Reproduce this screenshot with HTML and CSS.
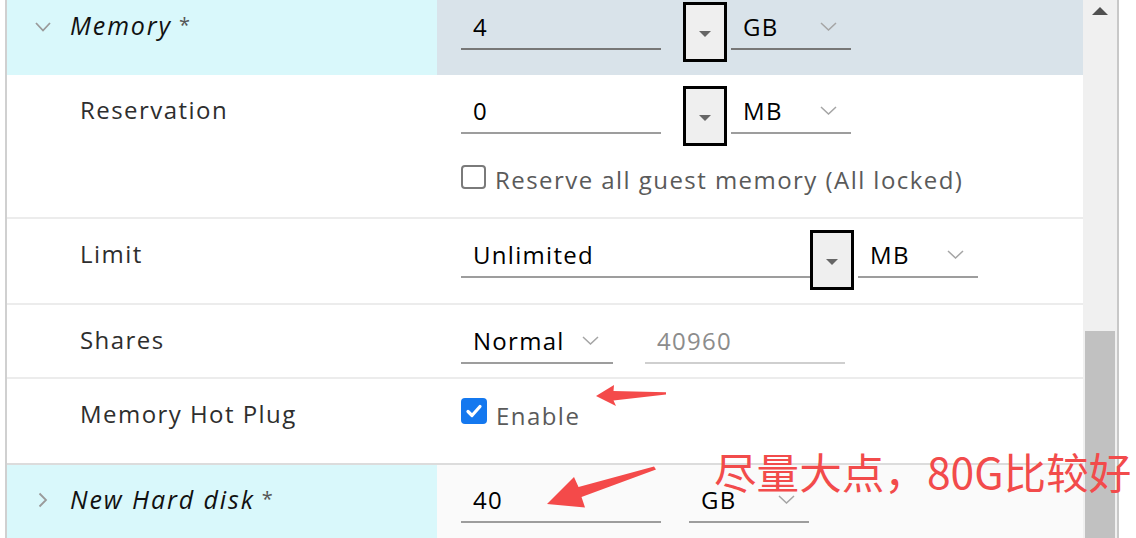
FILE: index.html
```html
<!DOCTYPE html>
<html>
<head>
<meta charset="utf-8">
<link rel="stylesheet" href="styles.css">
</head>
<body>
<div class="page">
  <div class="grid">
    <div class="row head">
      <div class="lab cyan">
        <svg class="twisty" width="16" height="10" viewBox="0 0 16 10"><polyline points="1,1 8,8.5 15,1" fill="none" stroke="#9a9a9a" stroke-width="1.8"/></svg>
        <span class="title">Memory</span><span class="star">*</span>
      </div>
      <div class="val headval">
        <div class="ctl">
          <div class="field dark w200"><span>4</span></div>
          <div class="spin sp1"><i></i></div>
          <div class="field dark sel w120"><span>GB</span><svg class="chev" width="17" height="9" viewBox="0 0 17 9"><polyline points="1,1 8.5,8 16,1" fill="none" stroke="#a5a5a5" stroke-width="1.5"/></svg></div>
        </div>
      </div>
    </div>

    <div class="row res">
      <div class="lab"><span class="name">Reservation</span></div>
      <div class="val col">
        <div class="ctl">
          <div class="field w200"><span>0</span></div>
          <div class="spin sp1"><i></i></div>
          <div class="field sel w120"><span>MB</span><svg class="chev" width="17" height="9" viewBox="0 0 17 9"><polyline points="1,1 8.5,8 16,1" fill="none" stroke="#a5a5a5" stroke-width="1.5"/></svg></div>
        </div>
        <label class="chk"><span class="box"></span><span class="chktext">Reserve all guest memory (All locked)</span></label>
      </div>
    </div>

    <div class="row lim">
      <div class="lab"><span class="name">Limit</span></div>
      <div class="val">
        <div class="ctl">
          <div class="field w350"><span>Unlimited</span></div>
          <div class="spin sp2"><i></i></div>
          <div class="field sel w120"><span>MB</span><svg class="chev" width="17" height="9" viewBox="0 0 17 9"><polyline points="1,1 8.5,8 16,1" fill="none" stroke="#a5a5a5" stroke-width="1.5"/></svg></div>
        </div>
      </div>
    </div>

    <div class="row shares">
      <div class="lab"><span class="name">Shares</span></div>
      <div class="val">
        <div class="ctl gap32">
          <div class="field sel w152"><span>Normal</span><svg class="chev" width="17" height="9" viewBox="0 0 17 9"><polyline points="1,1 8.5,8 16,1" fill="none" stroke="#a5a5a5" stroke-width="1.5"/></svg></div>
          <div class="field light w200"><span class="muted">40960</span></div>
        </div>
      </div>
    </div>

    <div class="row hot">
      <div class="lab"><span class="name">Memory Hot Plug</span></div>
      <div class="val">
        <label class="chk on"><span class="box checked"><svg width="18" height="16" viewBox="0 0 18 16"><polyline points="3,8.5 7,12.5 15,3.5" fill="none" stroke="#fff" stroke-width="3.2" stroke-linecap="round" stroke-linejoin="round"/></svg></span><span class="chktext">Enable</span></label>
      </div>
    </div>

    <div class="row disk">
      <div class="lab cyan">
        <svg class="twisty r" width="10" height="16" viewBox="0 0 10 16"><polyline points="1.5,1.5 8,8 1.5,14.5" fill="none" stroke="#9a9a9a" stroke-width="1.8"/></svg>
        <span class="title">New Hard disk</span><span class="star">*</span>
      </div>
      <div class="val diskval">
        <div class="ctl gap28">
          <div class="field w200"><span>40</span></div>
          <div class="field sel w120"><span>GB</span><svg class="chev" width="17" height="9" viewBox="0 0 17 9"><polyline points="1,1 8.5,8 16,1" fill="none" stroke="#a5a5a5" stroke-width="1.5"/></svg></div>
        </div>
      </div>
    </div>
  </div>

  <div class="scroll">
    <div class="up"></div>
    <div class="thumb"></div>
  </div>

  <svg class="annot" width="1136" height="538" viewBox="0 0 1136 538">
    <polygon points="596,396 614,385 613.5,391 666,392.2 666,394.6 613.5,400.5 616,406" fill="#f44a4a"/>
    <polygon points="547,504 574,477 578.5,487 654,466.4 656,469.6 581.5,497 585,507.5" fill="#f44a4a"/>
  </svg>
  <div class="note">尽量大点，80G比较好</div>
</div>
</body>
</html>
```

FILE: styles.css
```css
html, body {
  margin: 0;
  padding: 0;
  background: #fff;
}
body {
  font-family: "Open Sans", "Noto Sans", sans-serif;
  color: #2b2b2b;
}
.page {
  position: relative;
  width: 1136px;
  height: 538px;
  overflow: hidden;
  display: flex;
  align-items: stretch;
}
.grid {
  margin-left: 5px;
  width: 1076px;
  border-left: 2px solid #d0d0d0;
  display: flex;
  flex-direction: column;
}
.row {
  display: grid;
  grid-template-columns: 430px 646px;
  box-sizing: border-box;
  border-bottom: 2px solid #ececec;
  flex: none;
}
.row.head { height: 75px; border-bottom: none; }
.row.res { height: 144px; }
.row.lim { height: 86px; }
.row.shares { height: 74px; }
.row.hot { height: 86px; border-bottom-color: #dcdcdc; }
.row.disk { height: 80px; border-bottom: none; }

.lab {
  display: flex;
  align-items: flex-start;
  padding-left: 73px;
  box-sizing: border-box;
}
.lab.cyan {
  background: #d9f8fb;
  padding-left: 28px;
}
.head .lab { padding-top: 2px; }
.disk .lab { padding-top: 11px; }
.twisty { margin-top: 20px; margin-right: 19px; flex: none; }
.twisty.r { margin-top: 16px; margin-left: 3px; margin-right: 22px; }
.title {
  font-style: italic;
  font-size: 25px;
  letter-spacing: 1.9px;
  line-height: 46px;
  color: #111;
}
.star {
  font-size: 20px;
  line-height: 46px;
  color: #555;
  margin-left: 7px;
}
.name {
  font-size: 24px;
  letter-spacing: 1.45px;
  line-height: 46px;
  color: #2e2e2e;
}
.res .lab, .lim .lab, .shares .lab { padding-top: 12px; }
.hot .lab { padding-top: 12px; }

.val {
  padding-left: 24px;
  box-sizing: border-box;
}
.val.headval { background: #d9e3ea; padding-top: 4px; }
.val.diskval { background: #fafafa; padding-top: 12px; }
.res .val, .lim .val, .shares .val { padding-top: 13px; }
.hot .val { padding-top: 22px; }
.val.col { display: flex; flex-direction: column; }

.ctl {
  display: flex;
  align-items: flex-start;
}
.ctl.gap32 { gap: 32px; }
.ctl.gap28 { gap: 28px; }

.field {
  height: 46px;
  box-sizing: border-box;
  border-bottom: 2px solid #9d9d9d;
  display: flex;
  align-items: center;
  justify-content: space-between;
  padding-left: 12px;
  padding-right: 14px;
  font-size: 24px;
  letter-spacing: 1.3px;
  color: #000;
  flex: none;
}
.field.dark { border-bottom-color: #777; }
.field.light { border-bottom-color: #cfcfcf; }
.muted { color: #8c8c8c; }
.w200 { width: 200px; }
.w120 { width: 120px; }
.w350 { width: 350px; }
.w152 { width: 152px; }

.spin {
  width: 44px;
  height: 60px;
  box-sizing: border-box;
  border: 3px solid #000;
  background: #efefef;
  margin-top: -2px;
  display: flex;
  align-items: center;
  justify-content: center;
  flex: none;
}
.spin.sp1 { margin-left: 22px; margin-right: 4px; }
.spin.sp2 { margin-left: -1px; margin-right: 4px; }
.spin i {
  width: 0;
  height: 0;
  border-left: 6px solid transparent;
  border-right: 6px solid transparent;
  border-top: 6px solid #666;
  margin-top: 3px;
}

.chk {
  display: flex;
  align-items: center;
  height: 28px;
  margin-top: 19px;
}
.hot .chk { margin-top: 0; }
.box {
  width: 25px;
  height: 24px;
  box-sizing: border-box;
  border: 2px solid #7a7a7a;
  border-radius: 4px;
  margin-right: 9px;
  margin-top: -4px;
  display: flex;
  align-items: center;
  justify-content: center;
  flex: none;
}
.box.checked {
  width: 26px;
  height: 26px;
  border: none;
  background: #1478ef;
  margin-top: -8px;
}
.chktext {
  font-size: 24px;
  letter-spacing: 1.45px;
  color: #5a5a5a;
}

.scroll {
  width: 34px;
  background: #f0f0f0;
  border-right: 2px solid #c8c8c8;
  position: relative;
  flex: none;
}
.up {
  width: 0;
  height: 0;
  margin: 7px auto 0;
  border-left: 8px solid transparent;
  border-right: 8px solid transparent;
  border-bottom: 8px solid #505050;
}
.thumb {
  position: absolute;
  left: 2px;
  right: 2px;
  top: 331px;
  bottom: 0;
  background: #c1c1c1;
}

.annot {
  position: absolute;
  left: 0;
  top: 0;
  pointer-events: none;
}
.note {
  position: absolute;
  left: 714px;
  top: 447px;
  font-family: "Noto Sans CJK SC", "Noto Sans", sans-serif;
  font-size: 42.6px;
  line-height: 48px;
  color: #f24b4b;
  white-space: nowrap;
}
```
